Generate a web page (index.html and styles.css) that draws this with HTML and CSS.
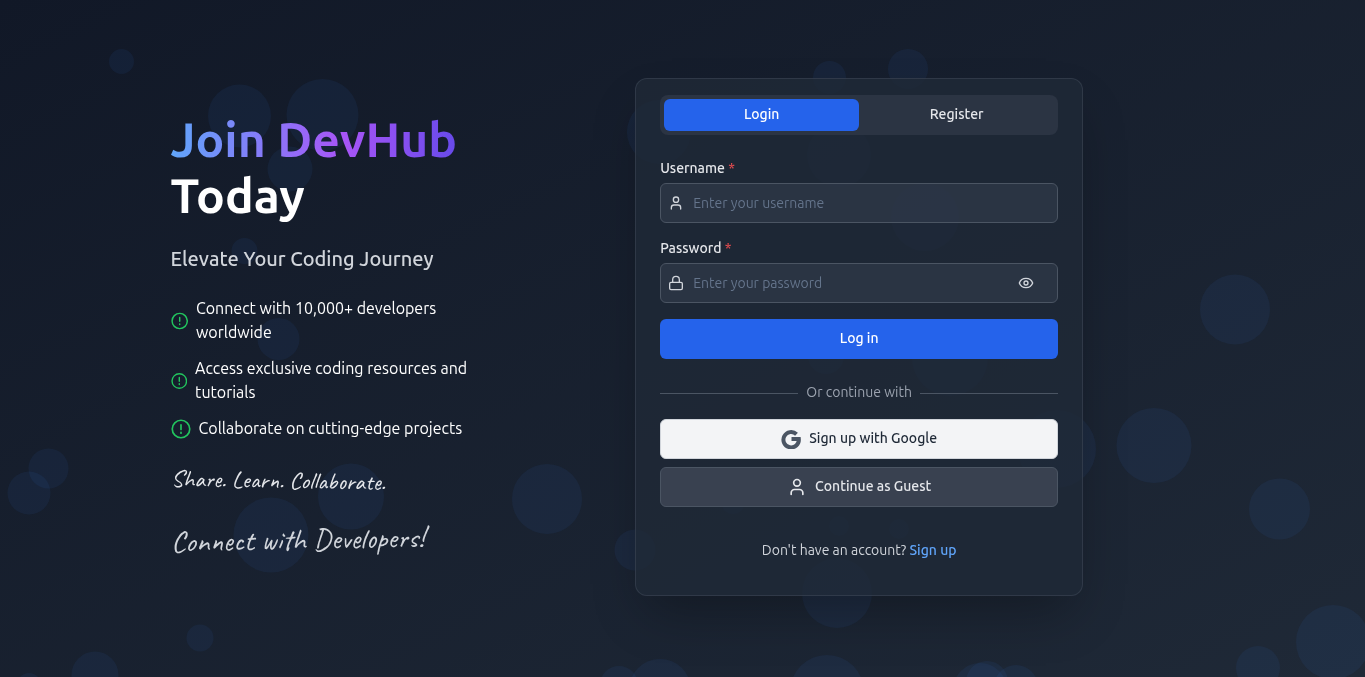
FILE: index.html
```html
<!DOCTYPE html>
<html lang="en">
<head>
<meta charset="utf-8">
<title>DevHub</title>
<link rel="stylesheet" href="styles.css">
</head>
<body>
<svg class="bubbles" aria-hidden="true">
  <g fill="#3b82f6" fill-opacity="0.07">
    <circle cx="121.5" cy="61.5" r="12.5"/><circle cx="239.5" cy="116" r="31.5"/><circle cx="322.5" cy="115" r="36"/>
    <circle cx="290" cy="169" r="22.5"/><circle cx="244.5" cy="251" r="13"/><circle cx="278.5" cy="339" r="21"/>
    <circle cx="48.5" cy="468.5" r="20"/><circle cx="29" cy="493" r="21.5"/><circle cx="271" cy="535" r="37.5"/>
    <circle cx="351" cy="496.5" r="33"/><circle cx="547" cy="499" r="35"/><circle cx="200" cy="638" r="13.5"/>
    <circle cx="95" cy="675" r="23.5"/><circle cx="29" cy="685" r="12"/>
    <circle cx="635" cy="550" r="20.5"/><circle cx="659" cy="132" r="32"/><circle cx="829.5" cy="77.5" r="16.5"/>
    <circle cx="908" cy="69" r="20"/><circle cx="839" cy="155" r="32"/><circle cx="925" cy="217" r="34"/>
    <circle cx="826" cy="356" r="18"/><circle cx="950" cy="358" r="38"/><circle cx="1057" cy="449" r="39"/>
    <circle cx="837" cy="593" r="35"/><circle cx="839" cy="526" r="10"/><circle cx="899" cy="529" r="10"/><circle cx="733" cy="502" r="12"/>
    <circle cx="1235" cy="309.5" r="35"/><circle cx="1154" cy="445.5" r="37.5"/><circle cx="1279.5" cy="509" r="30.5"/>
    <circle cx="1333" cy="642" r="37"/><circle cx="1258" cy="668" r="22"/>
    <circle cx="619" cy="685" r="19"/><circle cx="660" cy="690" r="31"/><circle cx="827" cy="692" r="37"/>
    <circle cx="980" cy="690" r="27"/><circle cx="987" cy="682" r="21"/><circle cx="1016" cy="687" r="22"/>
  </g>
</svg>
<main class="page">
  <section class="intro">
    <h1 class="title"><span class="brand">Join DevHub</span> Today</h1>
    <h2 class="tagline">Elevate Your Coding Journey</h2>
    <ul class="features">
      <li><svg class="tick" viewBox="0 0 24 24"><circle cx="12" cy="12" r="10.5"/><path d="M12 7v5.5M12 16v1"/></svg><span>Connect with 10,000+ developers worldwide</span></li>
      <li><svg class="tick" viewBox="0 0 24 24"><circle cx="12" cy="12" r="10.5"/><path d="M12 7v5.5M12 16v1"/></svg><span>Access exclusive coding resources and tutorials</span></li>
      <li><svg class="tick" viewBox="0 0 24 24"><circle cx="12" cy="12" r="10.5"/><path d="M12 7v5.5M12 16v1"/></svg><span>Collaborate on cutting-edge projects</span></li>
    </ul>
    <p class="script small">Share. Learn. Collaborate.</p>
    <p class="script large">Connect with Developers!</p>
  </section>

  <section class="card">
    <div class="tabs" role="tablist">
      <button class="tab active" role="tab" aria-selected="true">Login</button>
      <button class="tab" role="tab" aria-selected="false">Register</button>
    </div>
    <form class="form">
      <label class="label" for="user">Username <span class="star">*</span></label>
      <div class="field">
        <svg class="icon" viewBox="0 0 24 24"><circle cx="12" cy="7" r="4"/><path d="M19 21v-2a4 4 0 0 0-4-4H9a4 4 0 0 0-4 4v2"/></svg>
        <input id="user" type="text" placeholder="Enter your username">
      </div>
      <label class="label" for="pass">Password <span class="star">*</span></label>
      <div class="field">
        <svg class="icon" viewBox="0 0 24 24"><rect x="2.5" y="11" width="19" height="11" rx="2"/><path d="M7 11V7a5 5 0 0 1 10 0v4"/></svg>
        <input id="pass" type="password" placeholder="Enter your password">
        <button class="reveal" type="button" aria-label="Show password"><svg class="icon" viewBox="0 0 24 24"><path d="M2 12c1.500-4.200 5.300-7 10-7s8.500 2.800 10 7c-1.500 4.200-5.300 7-10 7s-8.500-2.800-10-7z"/><circle cx="12" cy="12" r="3"/></svg></button>
      </div>
      <button class="button primary" type="button">Log in</button>
    </form>
    <div class="divider"><span>Or continue with</span></div>
    <div class="options">
      <button class="button google"><svg class="glyph" viewBox="0 0 20 20"><path d="M15.500 5.200A7.700 7.700 0 1 0 17.800 10H10.500" /></svg>Sign up with Google</button>
      <button class="button guest"><svg class="glyph" viewBox="0 0 24 24"><circle cx="12" cy="7" r="4"/><path d="M19 21v-2a4 4 0 0 0-4-4H9a4 4 0 0 0-4 4v2"/></svg>Continue as Guest</button>
    </div>
    <p class="signup">Don't have an account? <a href="#">Sign up</a></p>
  </section>
</main>
</body>
</html>
```
FILE: styles.css
```css
* { box-sizing: border-box; }
body {
  margin: 0;
  min-height: 100vh;
  background: linear-gradient(to bottom right, #111827, #1f2937);
  color: #fff;
  font: 16px/24px Ubuntu, "Noto Sans", sans-serif;
  overflow: hidden;
}
h1, h2, p, ul { margin: 0; padding: 0; }
button, input { font: inherit; color: inherit; }
button { cursor: pointer; }
svg { fill: none; stroke: currentColor; stroke-width: 2; stroke-linecap: round; }
.bubbles { position: fixed; inset: 0; width: 100%; height: 100%; stroke: none; }
.page {
  position: relative;
  max-width: 1024px;
  min-height: 100vh;
  margin: 0 auto;
  padding-bottom: 4px;
  display: grid;
  grid-template-columns: 1fr 2fr;
  gap: 18px;
  align-items: center;
}
.intro { padding: 0 32px 6px 0; }
.title { font-size: 48px; line-height: 56px; font-weight: 700; white-space: nowrap; }
.brand {
  display: table;
  background: linear-gradient(to right, #60a5fa, #a855f7 60%, #4f46e5 115%);
  background-clip: text;
  color: transparent;
}
.tagline { margin-top: 22px; font-size: 20px; line-height: 28px; font-weight: 550; color: #d1d5db; }
.features { margin-top: 23px; list-style: none; display: grid; gap: 12px; }
.features li { display: flex; align-items: center; gap: 8px; }
.tick { width: 20px; height: 20px; margin-top: 2px; color: #22c55e; }
.script { font-family: Caveat, "Comic Neue", Lato, cursive; white-space: nowrap; }
.small { margin-top: 25px; font-size: 24px; line-height: 32px; transform: rotate(1deg); color: #e5e7eb; }
.large { margin-top: 24px; font-size: 30px; line-height: 36px; transform: rotate(-1deg); color: #d1d5db; }
.card {
  width: 100%;
  max-width: 448px;
  justify-self: center;
  padding: 16px 24px 35px;
  border: 1px solid rgba(75, 85, 99, .4);
  border-radius: 12px;
  background: rgba(31, 41, 55, .8);
  box-shadow: 0 25px 50px -12px rgba(0, 0, 0, .3);
  font-size: 14px;
  line-height: 20px;
}
.tabs { display: grid; grid-template-columns: 1fr 1fr; padding: 4px; border-radius: 8px; background: #2b3443; }
.tab { height: 32px; padding: 0 0 2px; border: 0; border-radius: 6px; background: none; color: #e5e7eb; font-weight: 500; }
.tab.active { background: #2563eb; color: #fff; }
.form { margin-top: 23px; display: flex; flex-direction: column; }
.label { margin-bottom: 5px; font-weight: 500; color: #e5e7eb; }
.star { color: #dc4a4e; }
.field {
  display: flex;
  align-items: center;
  gap: 9px;
  height: 40px;
  margin-bottom: 15px;
  padding: 0 23px 0 7px;
  border: 1px solid #4b5563;
  border-radius: 6px;
  background: rgba(55, 65, 81, .5);
}
.field input { flex: 1; min-width: 0; padding: 0; border: 0; outline: 0; background: none; }
.field input::placeholder { color: #64748b; opacity: 1; }
.icon { display: block; flex: none; width: 16px; height: 16px; color: #d1d5db; }
.reveal { padding: 0; border: 0; background: none; }
.button {
  display: flex;
  align-items: center;
  justify-content: center;
  gap: 8px;
  width: 100%;
  height: 40px;
  padding: 0 0 2px;
  border: 1px solid transparent;
  border-radius: 6px;
  font-weight: 500;
}
.primary { margin-top: 1px; background: #2563eb; color: #fff; }
.divider { display: flex; align-items: center; gap: 8px; margin: 23px 0 17px; color: #9ca3af; }
.divider::before, .divider::after { content: ""; flex: 1; height: 1px; margin-top: 3px; background: #4b5563; }
.options { display: grid; gap: 8px; }
.glyph { flex: none; width: 20px; height: 20px; margin-top: 2px; }
.google { background: #f3f4f6; border-color: #d1d5db; color: #1f2937; }
.google .glyph { color: #4b5563; stroke-width: 4; stroke-linecap: butt; }
.guest { background: #394150; border-color: #4b5563; color: #e5e7eb; }
.signup { margin-top: 33px; text-align: center; color: #d1d5db; }
.signup a { color: #60a5fa; font-weight: 500; text-decoration: none; }
```
